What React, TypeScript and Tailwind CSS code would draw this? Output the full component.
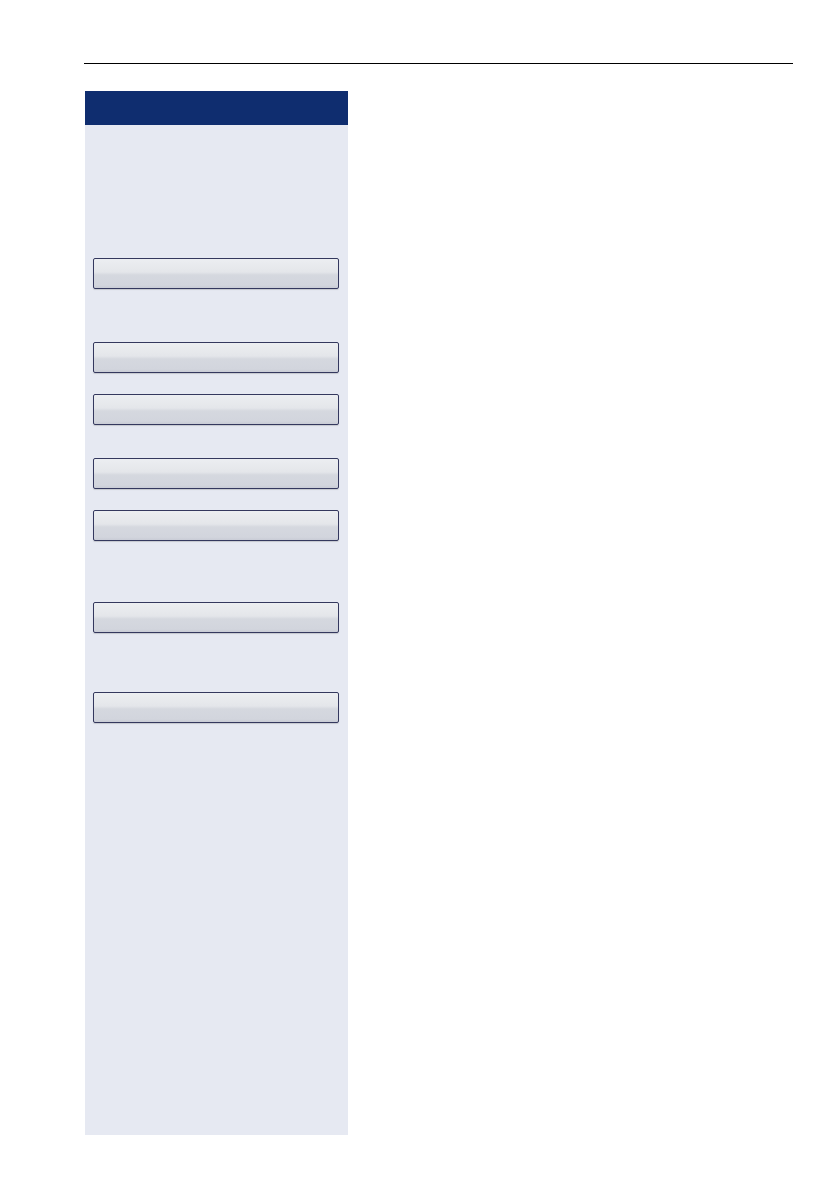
import React from "react";

function Btn({ mt }: { mt: string }) {
  return (
    <div
      className={`${mt} ml-[8px] h-[31px] w-[246px] rounded-[2px] border border-[#34385e] bg-[linear-gradient(to_bottom,#eceef1_0%,#e4e6ea_45%,#d5d8df_55%,#d2d5dd_90%,#c9ccd6_100%)] shadow-[0_1px_1px_rgba(0,0,0,0.15)]`}
    />
  );
}

export default function App() {
  return (
    <div className="min-h-[1192px] w-[838px] bg-white font-['Liberation_Sans',sans-serif]">
      <div className="h-[63px]" />
      <div className="ml-[84px] h-px w-[709px] bg-black" />
      <div className="ml-[85px] mt-[27px] flex h-[1044px] w-[263px] flex-col bg-[#e6e9f2]">
        <div className="h-[34px] w-full bg-[#0f2d6f]" />
        <Btn mt="mt-[133px]" />
        <Btn mt="mt-[53px]" />
        <Btn mt="mt-[21px]" />
        <Btn mt="mt-[33px]" />
        <Btn mt="mt-[21px]" />
        <Btn mt="mt-[61px]" />
        <Btn mt="mt-[59px]" />
      </div>
    </div>
  );
}
